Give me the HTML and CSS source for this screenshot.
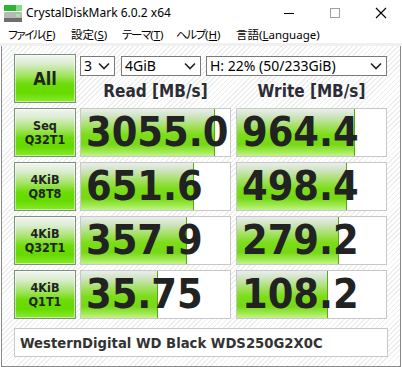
FILE: index.html
```html
<!DOCTYPE html>
<html>
<head>
<meta charset="utf-8">
<link rel="stylesheet" href="styles.css">
</head>
<body>
<div class="window">
  <div class="titlebar">
    <svg class="appicon" width="18" height="18" viewBox="0 0 18 18">
      <rect x="0" y="0" width="12" height="6" fill="#2fb52f"/>
      <rect x="12" y="0" width="6" height="6" fill="#7fe07f"/>
      <rect x="0" y="7" width="18" height="10" rx="1" fill="#b8b8b8"/>
      <rect x="0" y="13" width="18" height="4" fill="#6e6e6e"/>
      <rect x="12" y="9" width="4" height="3" fill="#9fe89f"/>
    </svg>
    <span class="title">CrystalDiskMark 6.0.2 x64</span>
    <div class="controls">
      <svg class="ctl" width="46" height="26" viewBox="0 0 46 26"><line x1="18" y1="13.5" x2="28" y2="13.5" stroke="#000" stroke-width="1"/></svg>
      <svg class="ctl" width="46" height="26" viewBox="0 0 46 26"><rect x="18.5" y="8.5" width="9" height="9" fill="none" stroke="#a0a0a0" stroke-width="1"/></svg>
      <svg class="ctl" width="46" height="26" viewBox="0 0 46 26"><path d="M18 8 L28 18 M28 8 L18 18" stroke="#000" stroke-width="1.1"/></svg>
    </div>
  </div>
  <div class="menubar">
    <span class="mi m1"><span class="kana">ファイル</span>(<u>F</u>)</span>
    <span class="mi m2">設定(<u>S</u>)</span>
    <span class="mi m3"><span class="kana">テーマ</span>(<u>T</u>)</span>
    <span class="mi m4"><span class="kana">ヘルプ</span>(<u>H</u>)</span>
    <span class="mi m5">言語(<u>L</u>anguage)</span>
  </div>
  <div class="sep"></div>
  <div class="main">
    <div class="grid">
      <div class="btn all">All</div>
      <div class="topright">
        <div class="selects">
          <div class="sel s1"><span>3</span><svg width="12" height="8" viewBox="0 0 12 8"><path d="M1 1.5 L6 6.5 L11 1.5" fill="none" stroke="#222" stroke-width="1.6"/></svg></div>
          <div class="sel s2"><span>4GiB</span><svg width="12" height="8" viewBox="0 0 12 8"><path d="M1 1.5 L6 6.5 L11 1.5" fill="none" stroke="#222" stroke-width="1.6"/></svg></div>
          <div class="sel s3"><span>H: 22% (50/233GiB)</span><svg width="12" height="8" viewBox="0 0 12 8"><path d="M1 1.5 L6 6.5 L11 1.5" fill="none" stroke="#222" stroke-width="1.6"/></svg></div>
        </div>
        <div class="headers">
          <div class="hd">Read [MB/s]</div>
          <div class="hd">Write [MB/s]</div>
        </div>
      </div>

      <div class="btn lbl">Seq<br>Q32T1</div>
      <div class="cell"><div class="bar" style="width:90%"></div><div class="val">3055.0</div></div>
      <div class="cell w"><div class="bar" style="width:79%"></div><div class="val">964.4</div></div>

      <div class="btn lbl">4KiB<br>Q8T8</div>
      <div class="cell"><div class="bar" style="width:76%"></div><div class="val">651.6</div></div>
      <div class="cell w"><div class="bar" style="width:74%"></div><div class="val">498.4</div></div>

      <div class="btn lbl">4KiB<br>Q32T1</div>
      <div class="cell"><div class="bar" style="width:71%"></div><div class="val">357.9</div></div>
      <div class="cell w"><div class="bar" style="width:68.5%"></div><div class="val">279.2</div></div>

      <div class="btn lbl">4KiB<br>Q1T1</div>
      <div class="cell"><div class="bar" style="width:51.5%"></div><div class="val">35.75</div></div>
      <div class="cell w"><div class="bar" style="width:61%"></div><div class="val">108.2</div></div>
    </div>
    <div class="drive">WesternDigital WD Black WDS250G2X0C</div>
  </div>
</div>
</body>
</html>
```

FILE: styles.css
```css
* { box-sizing: border-box; }
html, body { margin: 0; padding: 0; background: #fff; }
body { width: 402px; height: 367px; overflow: hidden; font-family: "Noto Sans", "Noto Sans CJK JP", sans-serif; }

.window { display: flex; flex-direction: column; height: 367px; }

.titlebar { height: 26px; display: flex; align-items: center; background: #fff; }
.appicon { margin-left: 4px; margin-top: 1px; flex: none; }
.title { margin-left: 4px; font-size: 12px; color: #000; font-family: "Noto Sans", sans-serif; line-height: 1; }
.controls { margin-left: auto; display: flex; align-items: flex-start; align-self: flex-start; margin-right: -2px; }
.ctl { display: block; }

.menubar { height: 17px; display: flex; align-items: center; padding-left: 8px; background: #fff; }
.mi { font-size: 11.5px; font-family: "Noto Sans", "Noto Sans CJK JP", sans-serif; color: #000; line-height: 1; white-space: nowrap; }
.mi u { text-decoration: underline; text-underline-offset: 1px; }
.kana { font-family: "Noto Sans CJK JP", sans-serif; font-feature-settings: "palt"; letter-spacing: -1.3px; }
.m1 { width: 63px; }
.m2 { width: 51px; }
.m3 { width: 54px; }
.m4 { width: 60px; }

.sep { height: 3px; background: #f0f0f0; }

.main {
  flex: 1;
  margin: 0 1px;
  border: 1px solid #8a8a8a;
  border-top: none;
  padding: 8px 12px 9px 12px;
  background: repeating-linear-gradient(135deg, #ffffff 0px, #ffffff 2.5px, #eeeeee 2.5px, #eeeeee 3.6px);
}

.grid {
  display: grid;
  grid-template-columns: 62px 151px 152px;
  grid-auto-rows: 49px;
  column-gap: 4px;
  row-gap: 5px;
}

.btn {
  border: 1px solid #7a927a;
  background: linear-gradient(to bottom, #f2f5f2 0%, #dcecd0 18%, #a6e46a 42%, #6cdc06 62%, #66da00 80%, #88ea2a 100%);
  box-shadow: inset 0 0 0 1px rgba(255,255,255,0.5);
  display: flex; align-items: center; justify-content: center;
  text-align: center;
  font-family: "DejaVu Sans Condensed", "DejaVu Sans", sans-serif;
  font-weight: bold;
  color: #222;
}
.all { font-size: 18px; }
.lbl { font-size: 12.5px; line-height: 14px; padding-top: 1px; }

.topright { grid-column: 2 / 4; display: flex; flex-direction: column; }
.selects { display: flex; margin-top: 2px; height: 20px; }
.sel {
  height: 20px; border: 1px solid #7a7a7a; background: #fff;
  display: flex; align-items: center; justify-content: space-between;
  padding: 0 3px 0 3px;
  font-family: "Noto Sans", sans-serif; font-size: 14px; color: #000;
}
.sel span { line-height: 1; margin-top: -1px; }
.s1 { width: 35px; }
.s2 { width: 80px; margin-left: 6px; }
.s3 { width: 181px; margin-left: 5px; }
.sel svg { margin-right: 1px; }

.headers { display: grid; grid-template-columns: 151px 152px; column-gap: 4px; flex: 1; align-items: center; padding-top: 3px; }
.hd { text-align: center; font-family: "DejaVu Sans Condensed", "DejaVu Sans", sans-serif; font-weight: bold; font-size: 17px; color: #2c2c34; }
.headers .hd:last-child { margin-left: 1px; }

.cell {
  display: grid;
  border: 1px solid #c8c8c8;
  background: #fff;
  overflow: hidden;
}
.cell.w { margin-left: 1px; }
.bar, .val { grid-area: 1 / 1; }
.bar {
  height: 100%;
  background: linear-gradient(to bottom, #eaeeea 0%, #d0e4c4 15%, #a0e05c 38%, #7cdc18 55%, #76d814 75%, #a4ec58 92%, #c4f290 100%);
  border-right: 1px solid #56aa10;
}
.val {
  align-self: center;
  padding-left: 5px;
  font-family: "DejaVu Sans Condensed", "DejaVu Sans", sans-serif;
  font-weight: bold;
  font-size: 41px;
  line-height: 1;
  color: #222;
  white-space: nowrap;
}

.drive {
  margin-top: 9px;
  height: 29px;
  border: 1px solid #c8c8c8;
  background: #fff;
  display: flex; align-items: center;
  padding-left: 5px;
  font-family: "DejaVu Sans Condensed", "DejaVu Sans", sans-serif;
  font-weight: bold;
  font-size: 14.7px;
  color: #333;
}
```
